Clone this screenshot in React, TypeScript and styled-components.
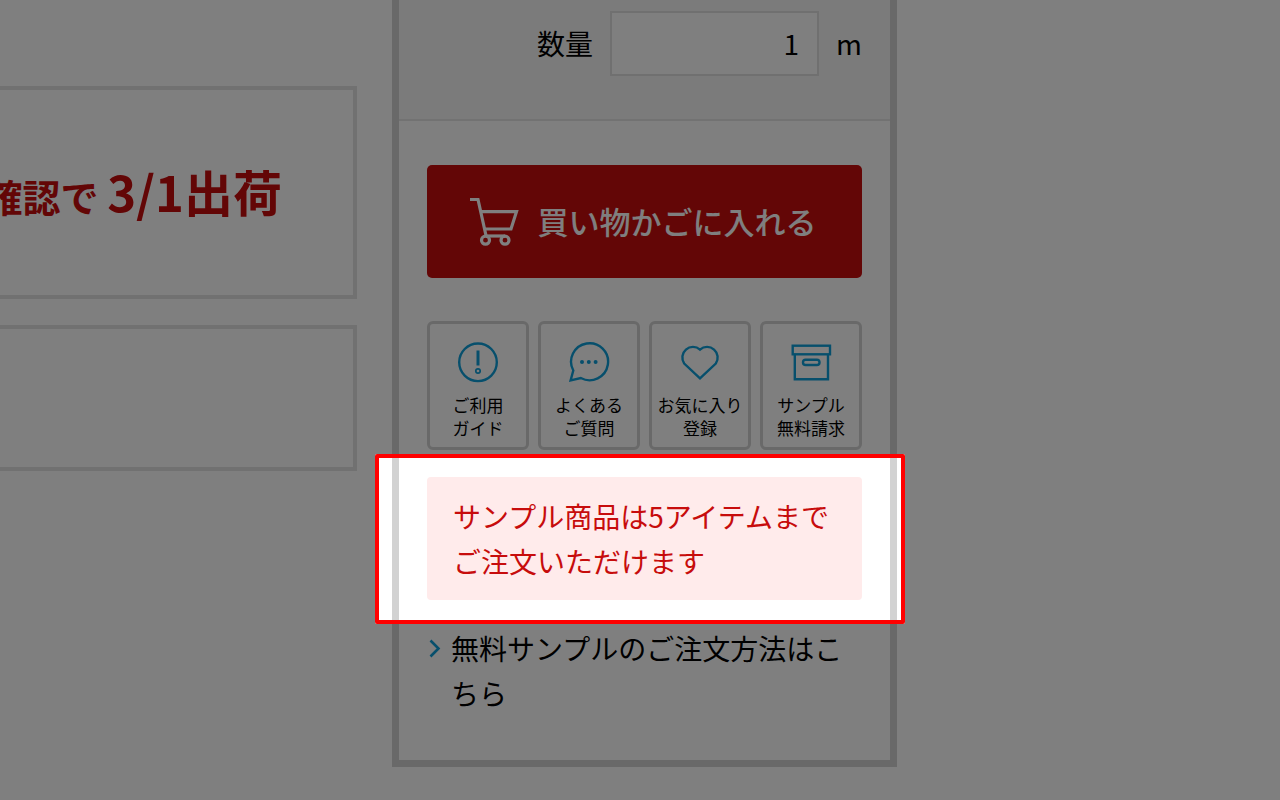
import React from "react";
import styled, { createGlobalStyle } from "styled-components";

const GlobalStyle = createGlobalStyle`
  *, *::before, *::after { box-sizing: border-box; }
  body {
    margin: 0;
    background: #fff;
    color: #000;
    font-family: "Noto Sans CJK JP", "Noto Sans", sans-serif;
  }
`;

const red = "#c70c0c";
const blue = "#0e9fd9";

const Page = styled.div`
  display: grid;
  grid-template-columns: minmax(0, 357fr) minmax(0, 505fr) minmax(0, 348fr);
  column-gap: 35px;
  align-items: start;
  min-height: 100vh;
  overflow: hidden;
`;

const InfoColumn = styled.div`
  display: flex;
  flex-direction: column;
  gap: 26px;
  padding-top: 86px;
`;

const InfoCard = styled.section<{ $height: number }>`
  display: flex;
  align-items: center;
  justify-content: flex-end;
  min-height: ${(p) => p.$height}px;
  padding: 2px 71px 0 0;
  border: 4px solid #e2e2e2;
  border-left: 0;
  overflow: hidden;
`;

const ShipDate = styled.p`
  margin: 0;
  color: ${red};
  font-size: 38px;
  font-weight: 700;
  line-height: 64px;
  white-space: nowrap;

  strong {
    font-size: 49px;
    font-weight: 700;
  }
`;

const Panel = styled.main`
  border: 7px solid #d2d2d2;
  border-top: 0;
`;

const QuantityRow = styled.div`
  display: flex;
  align-items: center;
  justify-content: flex-end;
  gap: 17px;
  padding: 11px 28px 43px;
  border-bottom: 2px solid #e4e4e4;
  background: #f6f6f6;
  font-size: 28px;
  line-height: 45px;
`;

const QuantityInput = styled.input`
  width: 209px;
  height: 65px;
  padding: 0 18px 2px;
  border: 2px solid #e0e0e0;
  border-radius: 0;
  background: #fff;
  color: inherit;
  font: inherit;
  text-align: right;
`;

const Actions = styled.div`
  padding: 44px 28px;
`;

const CartButton = styled.button`
  display: flex;
  align-items: center;
  justify-content: center;
  gap: 19px;
  width: 100%;
  height: 113px;
  padding: 0 4px 2px 0;
  border: 0;
  border-radius: 5px;
  background: ${red};
  color: #fff;
  font-family: inherit;
  font-size: 31px;
  font-weight: 500;
  line-height: 45px;
`;

const Tiles = styled.nav`
  display: grid;
  grid-template-columns: repeat(4, minmax(0, 1fr));
  gap: 9px;
  margin-top: 43px;
`;

const Tile = styled.a`
  display: flex;
  flex-direction: column;
  align-items: center;
  gap: 10px;
  padding: 17px 0 8px;
  border: 3px solid #d2d2d2;
  border-radius: 6px;
  color: inherit;
  font-size: 17px;
  line-height: 23px;
  text-align: center;
  text-decoration: none;
  white-space: nowrap;
`;

const TileIcon = styled.svg`
  width: 42px;
  height: 42px;
  fill: none;
  stroke: ${blue};
  stroke-width: 2.4;
`;

const NoticeArea = styled.div`
  position: relative;
  margin-top: 27px;
`;

const Notice = styled.p`
  margin: 0;
  padding: 17px 26px 16px;
  border-radius: 4px;
  background: #ffebeb;
  color: ${red};
  font-size: 28px;
  line-height: 45px;
`;

const Spotlight = styled.div`
  position: absolute;
  inset: -23px -43px -24px -52px;
  border: 4px solid #f00;
  border-radius: 2px;
  box-shadow: 0 0 0 200vmax rgba(0, 0, 0, 0.5);
  pointer-events: none;
`;

const GuideLink = styled.a`
  display: flex;
  align-items: flex-start;
  gap: 8px;
  margin-top: 26px;
  color: inherit;
  font-size: 28px;
  line-height: 45px;
  text-decoration: none;
`;

const Chevron = styled.svg`
  flex: none;
  width: 16px;
  height: 45px;
  fill: none;
  stroke: ${blue};
  stroke-width: 2.6;
`;

const CartIcon = () => (
  <svg width="50" height="50" viewBox="0 0 50 50" fill="none" stroke="#fff" strokeWidth="3.2" aria-hidden="true">
    <path d="M1 3.5H9L17 39.5" />
    <path d="M11.5 15.7H47.5L42 33H15.5" />
    <path d="M17 40H36" />
    <circle cx="16.5" cy="44.2" r="4" />
    <circle cx="36" cy="44.2" r="4" />
  </svg>
);

const tiles = [
  {
    lines: ["ご利用", "ガイド"],
    icon: (
      <>
        <circle cx="21" cy="21.3" r="18.8" />
        <path d="M21 9.5V24.5" strokeWidth="3" />
        <circle cx="21" cy="30" r="2.2" strokeWidth="1.7" />
      </>
    ),
  },
  {
    lines: ["よくある", "ご質問"],
    icon: (
      <>
        <path d="M5.3 29.5A18.5 18.5 0 1 1 12.8 37L2.6 39.4Z" />
        <g fill={blue} stroke="none">
          <circle cx="14" cy="21" r="2" />
          <circle cx="20.8" cy="21" r="2" />
          <circle cx="27.6" cy="21" r="2" />
        </g>
      </>
    ),
  },
  {
    lines: ["お気に入り", "登録"],
    icon: <path d="M21 37.4L5.2 22.5A10.6 10.6 0 0 1 21 8.6A10.6 10.6 0 0 1 36.8 22.5Z" />,
  },
  {
    lines: ["サンプル", "無料請求"],
    icon: (
      <>
        <rect x="2.7" y="4.7" width="37.3" height="8.6" />
        <path d="M4.8 13.3V38.3H38V13.3" />
        <rect x="13" y="18.7" width="16.5" height="5.3" rx="2.6" />
      </>
    ),
  },
];

export default function App() {
  return (
    <>
      <GlobalStyle />
      <Page>
        <InfoColumn>
          <InfoCard $height={213}>
            <ShipDate>
              確認で <strong>3/1出荷</strong>
            </ShipDate>
          </InfoCard>
          <InfoCard $height={146} />
        </InfoColumn>
        <Panel>
          <QuantityRow>
            <label htmlFor="quantity">数量</label>
            <QuantityInput id="quantity" type="text" inputMode="numeric" defaultValue="1" />
            <span>m</span>
          </QuantityRow>
          <Actions>
            <CartButton type="button">
              <CartIcon />
              買い物かごに入れる
            </CartButton>
            <Tiles>
              {tiles.map(({ lines, icon }) => (
                <Tile href="#" key={lines[0]}>
                  <TileIcon viewBox="0 0 42 42" aria-hidden="true">
                    {icon}
                  </TileIcon>
                  <span>
                    {lines[0]}
                    <br />
                    {lines[1]}
                  </span>
                </Tile>
              ))}
            </Tiles>
            <NoticeArea>
              <Notice>
                サンプル商品は5アイテムまで
                <br />
                ご注文いただけます
              </Notice>
              <Spotlight />
            </NoticeArea>
            <GuideLink href="#">
              <Chevron viewBox="0 0 16 45" aria-hidden="true">
                <path d="M3.5 14.5L11.5 22.5L3.5 30.5" />
              </Chevron>
              <span>無料サンプルのご注文方法はこちら</span>
            </GuideLink>
          </Actions>
        </Panel>
      </Page>
    </>
  );
}
